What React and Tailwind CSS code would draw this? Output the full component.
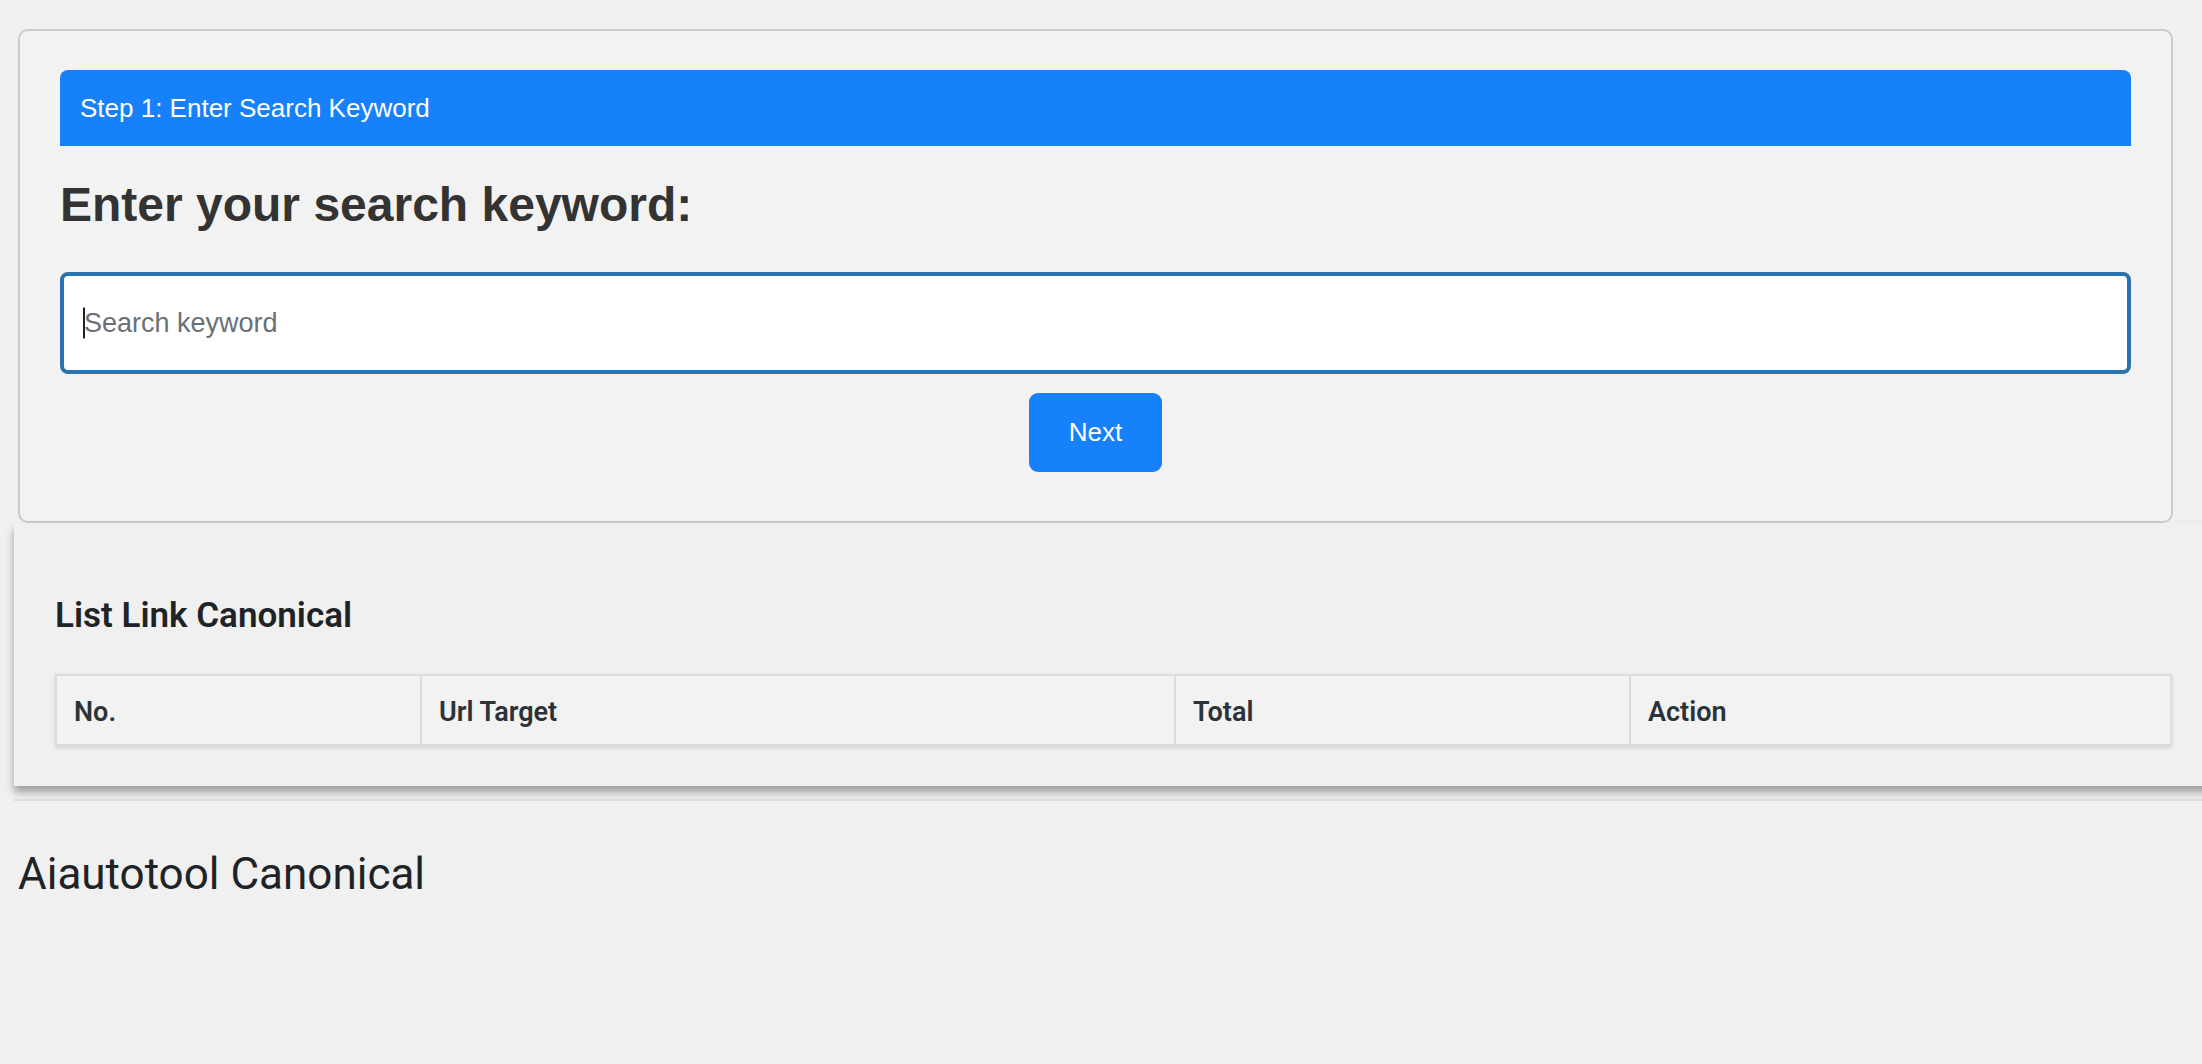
import React from "react";

export default function App() {
  const cols = ["No.", "Url Target", "Total", "Action"];
  return (
    <div className="min-h-screen w-full overflow-hidden bg-[#f0f0f0] pt-[29px] pb-[120px]">
      {/* Step card */}
      <div className="ml-[18px] w-[2155px] rounded-[10px] border-2 border-[#cbcbcb] bg-[#f2f2f2] px-[40px] pt-[39px] pb-[49px] font-['Liberation_Sans',Arial,sans-serif]">
        <div className="flex h-[76px] items-center rounded-t-[8px] bg-[#1780fb] px-[20px] text-[26px] text-white">
          Step 1: Enter Search Keyword
        </div>
        <h2 className="mt-[31px] mb-[40px] text-[48px] font-bold leading-[55px] text-[#333333]">
          Enter your search keyword:
        </h2>
        <div className="relative">
          <input
            type="text"
            placeholder="Search keyword"
            className="block h-[102px] w-full rounded-[8px] border-4 border-[#2a72b0] bg-white px-[20px] text-[27px] text-[#333] outline-none placeholder:text-[#6b6f76]"
          />
          <span className="pointer-events-none absolute top-1/2 left-[23px] h-[31px] w-[2px] -translate-y-1/2 bg-[#222]" />
        </div>
        <div className="mt-[19px] flex justify-center">
          <button className="h-[79px] w-[133px] rounded-[9px] bg-[#1780fb] text-[26px] text-white">
            Next
          </button>
        </div>
      </div>

      {/* List panel */}
      <div className="ml-[14px] w-[2300px] bg-[#f0f0f0] pt-[72px] pb-[40px] pl-[41px] shadow-[0_6px_8px_rgba(0,0,0,0.35)] font-['Roboto','Liberation_Sans',sans-serif]">
        <h2 className="text-[35px] font-semibold leading-[42px] text-[#1d2327]">
          List Link Canonical
        </h2>
        <div className="mt-[37px] grid h-[72px] w-[2117px] grid-cols-[363px_754px_455px_1fr] border-2 border-[#dcdcdc] bg-[#f2f2f2] shadow-[0_2px_4px_rgba(0,0,0,0.12)]">
          {cols.map((c, i) => (
            <div
              key={c}
              className={
                i === 0
                  ? "flex items-center pt-[5px] pl-[17px] text-[27px] font-semibold text-[#2c3338]"
                  : "flex items-center border-l-2 border-[#dcdcdc] pt-[5px] pl-[17px] text-[27px] font-semibold text-[#2c3338]"
              }
            >
              {c}
            </div>
          ))}
        </div>
      </div>

      <div className="mt-[13px] ml-[14px] h-[2px] bg-[#dcdcdc]" />

      <div className="mt-[47px] ml-[18px] text-[44px] leading-[52px] text-[#1d2327] font-['Roboto','Liberation_Sans',sans-serif]">
        Aiautotool Canonical
      </div>
    </div>
  );
}
